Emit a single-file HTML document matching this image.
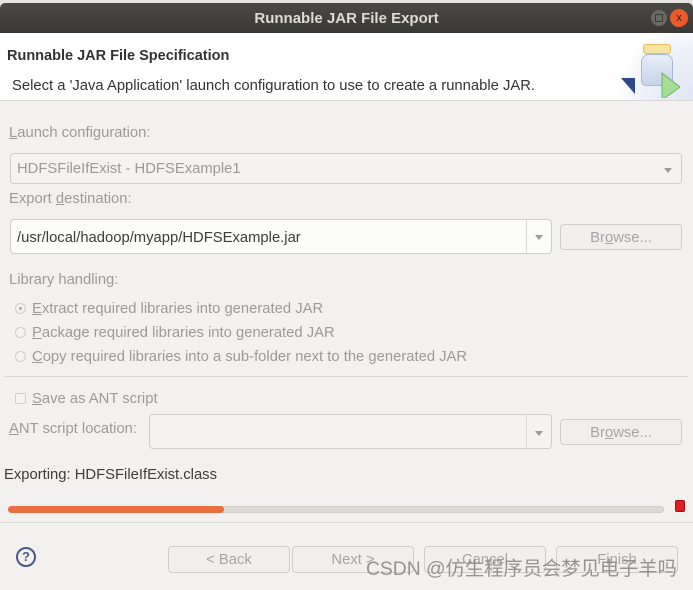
<!DOCTYPE html>
<html><head><meta charset="utf-8"><style>
*{margin:0;padding:0;box-sizing:border-box}
body{width:693px;height:590px;overflow:hidden;background:#f2f1f0;font-family:"Liberation Sans","Noto Sans CJK SC",sans-serif;font-size:14.8px;color:#3c3c3c;position:relative}
.a{position:absolute;white-space:nowrap;line-height:21px}
.g{color:#9a9a9a}
.box{position:absolute;border:1px solid #cfcdca;border-radius:4px;background:#f4f3f2}
.btn{position:absolute;border:1px solid #cfcdca;border-radius:4px;background:#f0efee;color:#a5a5a5;text-align:center}
.tri{position:absolute;width:0;height:0;border-left:4px solid transparent;border-right:4px solid transparent;border-top:5px solid #9a9a9a}
.radio{position:absolute;width:11px;height:11px;border:1px solid #cfcdca;border-radius:50%;background:#f4f3f2}
</style></head><body>
<div class="a" style="left:0;top:0;width:693px;height:4px;background:#e6e4e0"></div>
<div class="a" style="left:0;top:3px;width:693px;height:30px;background:linear-gradient(#4a4945,#3a3935);border-radius:5px 5px 0 0"></div>
<div class="a" style="left:0;top:8px;width:693px;text-align:center;color:#dfdbd2;font-weight:bold;font-size:15px">Runnable JAR File Export</div>
<div class="a" style="left:651px;top:10px;width:16px;height:16px;border-radius:50%;background:#6a6965"></div>
<div class="a" style="left:655px;top:14px;width:8px;height:8px;border:1px solid #3a3935"></div>
<div class="a" style="left:670px;top:9px;width:18px;height:18px;border-radius:50%;background:#e95b2b;color:#3a2010;font-size:11px;text-align:center;line-height:18px">x</div>
<div class="a" style="left:0;top:33px;width:693px;height:67px;background:#fff"></div>
<div class="a" style="left:615px;top:33px;width:78px;height:67px;background:radial-gradient(circle at 100% 100%,#dfe5f3 0,#eef1f9 50%,#fff 75%)"></div>
<div class="a" style="left:643px;top:44px;width:28px;height:10px;background:#f6e3a0;border:1px solid #e0c060;border-radius:3px"></div>
<div class="a" style="left:641px;top:54px;width:32px;height:32px;background:linear-gradient(#e8eef8,#c6d3ea);border:1px solid #a8b8d4;border-radius:8px 8px 5px 5px"></div>
<svg class="a" style="left:620px;top:70px" width="60" height="28"><path d="M1 8 L15 8 L15 24 Z" fill="#2c4a86"/><path d="M42 3 L60 17 L42 30 Z" fill="#a5dd95" stroke="#6ab85a"/></svg>
<div class="a" style="left:7px;top:46px;font-weight:bold;color:#333;font-size:14.5px">Runnable JAR File Specification</div>
<div class="a" style="left:12px;top:76px;color:#333">Select a 'Java Application' launch configuration to use to create a runnable JAR.</div>
<div class="a" style="left:0;top:100px;width:693px;height:1px;background:#d8d6d3"></div>
<div class="a g" style="left:9px;top:123px"><u>L</u>aunch configuration:</div>
<div class="box" style="left:10px;top:153px;width:672px;height:31px"></div>
<div class="a g" style="left:17px;top:159px">HDFSFileIfExist - HDFSExample1</div>
<div class="tri" style="left:664px;top:168px"></div>
<div class="a g" style="left:9px;top:189px">Export <u>d</u>estination:</div>
<div class="box" style="left:10px;top:219px;width:542px;height:35px;background:#fbfbfa"></div>
<div class="a" style="left:526px;top:220px;width:1px;height:33px;background:#dcdad7"></div>
<div class="a" style="left:17px;top:228px;color:#3c3c3c">/usr/local/hadoop/myapp/HDFSExample.jar</div>
<div class="tri" style="left:535px;top:235px"></div>
<div class="btn" style="left:560px;top:224px;width:122px;height:26px;line-height:26px">Br<u>o</u>wse...</div>
<div class="a g" style="left:9px;top:270px">Library handling:</div>
<div class="radio" style="left:15px;top:303px"><div style="margin:3px;width:3px;height:3px;border-radius:50%;background:#aaa"></div></div>
<div class="a g" style="left:32px;top:299px"><u>E</u>xtract required libraries into generated JAR</div>
<div class="radio" style="left:15px;top:327px"></div>
<div class="a g" style="left:32px;top:323px"><u>P</u>ackage required libraries into generated JAR</div>
<div class="radio" style="left:15px;top:351px"></div>
<div class="a g" style="left:32px;top:347px"><u>C</u>opy required libraries into a sub-folder next to the generated JAR</div>
<div class="a" style="left:4px;top:376px;width:684px;height:1px;background:#dad8d5"></div>
<div class="a" style="left:15px;top:393px;width:11px;height:11px;border:1px solid #cfcdca;border-radius:2px;background:#f4f3f2"></div>
<div class="a g" style="left:32px;top:389px"><u>S</u>ave as ANT script</div>
<div class="a g" style="left:9px;top:419px"><u>A</u>NT script location:</div>
<div class="box" style="left:149px;top:414px;width:403px;height:35px"></div>
<div class="a" style="left:526px;top:415px;width:1px;height:33px;background:#dcdad7"></div>
<div class="tri" style="left:535px;top:431px"></div>
<div class="btn" style="left:560px;top:419px;width:122px;height:26px;line-height:26px">Br<u>o</u>wse...</div>
<div class="a" style="left:4px;top:465px;color:#3c3c3c">Exporting: HDFSFileIfExist.class</div>
<div class="a" style="left:8px;top:506px;width:656px;height:7px;border-radius:4px;background:#dcdad7;border:1px solid #cfcdca"></div>
<div class="a" style="left:8px;top:506px;width:216px;height:7px;border-radius:4px;background:#e96e3d"></div>
<div class="a" style="left:675px;top:500px;width:10px;height:12px;background:#e02020;border:1px solid #a01010;border-radius:2px"></div>
<div class="a" style="left:0;top:522px;width:693px;height:1px;background:#dedcd9"></div>
<div class="a" style="left:16px;top:547px;width:20px;height:20px;border:2px solid #4a5a86;border-radius:50%;color:#4a5a86;font-weight:bold;font-size:13px;text-align:center;line-height:16px">?</div>
<div class="btn" style="left:168px;top:546px;width:122px;height:27px;line-height:27px">&lt; Back</div>
<div class="btn" style="left:292px;top:546px;width:122px;height:27px;line-height:27px">Next &gt;</div>
<div class="btn" style="left:424px;top:546px;width:122px;height:27px;line-height:27px">Cancel</div>
<div class="btn" style="left:556px;top:546px;width:122px;height:27px;line-height:27px">Finish</div>
<div class="a" style="left:366px;top:558px;font-size:19.3px;line-height:24px;color:#8a8a8a;opacity:.9">CSDN @仿生程序员会梦见电子羊吗</div>
</body></html>
